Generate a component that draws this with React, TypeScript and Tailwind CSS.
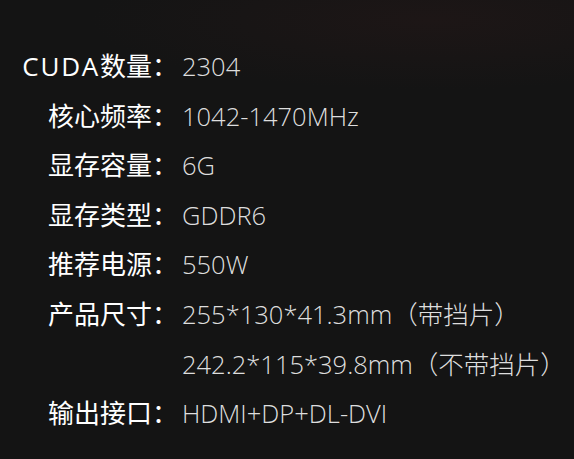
import React from "react";

const specs = [
  { label: "数量：", prefix: "CUDA", value: "2304" },
  { label: "核心频率：", value: "1042-1470MHz" },
  { label: "显存容量：", value: "6G" },
  { label: "显存类型：", value: "GDDR6" },
  { label: "推荐电源：", value: "550W" },
  { label: "产品尺寸：", value: "255*130*41.3mm（带挡片）" },
  { label: "", value: "242.2*115*39.8mm（不带挡片）" },
  { label: "输出接口：", value: "HDMI+DP+DL-DVI" },
];

const App = () => {
  return (
    <div className="w-[574px] h-[459px] overflow-hidden bg-[#141414] bg-[radial-gradient(ellipse_340px_70px_at_430px_20px,#1d1616_0%,#181515_55%,transparent_100%)]">
      <div className="pt-[42px] grid grid-cols-[178px_1fr] gap-x-[4px]">
        {specs.map((row, i) => (
          <React.Fragment key={i}>
            <div className="h-[49.6px] leading-[49.6px] text-right text-[26px] font-normal text-white whitespace-nowrap [font-family:'Open_Sans','Noto_Sans_CJK_SC',sans-serif]">
              {row.prefix && <span className="tracking-[1.75px]">{row.prefix}</span>}
              {row.label}
            </div>
            <div className="h-[49.6px] leading-[49.6px] text-[25.5px] font-light text-[#dedede] whitespace-nowrap [font-family:'Open_Sans','Noto_Sans_CJK_SC',sans-serif]">
              {row.value}
            </div>
          </React.Fragment>
        ))}
      </div>
    </div>
  );
};

export default App;
